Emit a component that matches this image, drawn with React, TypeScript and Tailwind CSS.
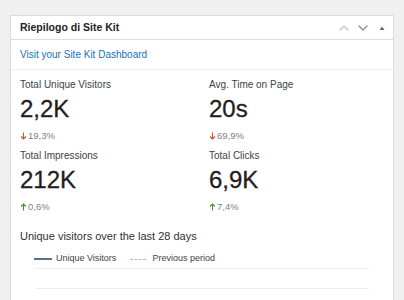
import { ChevronDown, ChevronUp } from "lucide-react";

interface Stat {
  label: string;
  value: string;
  change: string;
  up: boolean;
}

const stats: Stat[] = [
  { label: "Total Unique Visitors", value: "2,2K", change: "19,3%", up: false },
  { label: "Avg. Time on Page", value: "20s", change: "69,9%", up: false },
  { label: "Total Impressions", value: "212K", change: "0,6%", up: true },
  { label: "Total Clicks", value: "6,9K", change: "7,4%", up: true },
];

const Arrow = ({ up }: { up: boolean }) => (
  <svg width="7" height="8" viewBox="0 0 7 8" className={up ? "text-[#4f8a3e]" : "text-[#c9503a]"}>
    {up ? (
      <path d="M3.5 7.5V1M1 3.5L3.5 1L6 3.5" fill="none" stroke="currentColor" strokeWidth="1.1" />
    ) : (
      <path d="M3.5 0.5V7M1 4.5L3.5 7L6 4.5" fill="none" stroke="currentColor" strokeWidth="1.1" />
    )}
  </svg>
);

const StatCell = ({ stat, first }: { stat: Stat; first: boolean }) => (
  <div className={first ? "" : "mt-[8px]"}>
    <div className="h-[12px] text-[10px] leading-[12px] text-[#3c434a]">{stat.label}</div>
    <div className="mt-[4px] h-[28px] text-[24px] leading-[28px] text-[#1e1e1e] [-webkit-text-stroke:0.3px_#1e1e1e]">
      {stat.value}
    </div>
    <div className="mt-[7px] flex h-[12px] items-center gap-[1px] text-[9.5px] leading-[12px] text-[#7e8186]">
      <Arrow up={stat.up} />
      <span>{stat.change}</span>
    </div>
  </div>
);

export default function App() {
  return (
    <div
      className="min-h-screen bg-[#f0f0f1] px-[10px] pt-[15px]"
      style={{ fontFamily: '"Liberation Sans", Arial, sans-serif' }}
    >
      <div className="h-[300px] border border-[#dcdcde] bg-white">
        {/* header */}
        <div className="flex h-[24px] items-center justify-between border-b border-[#dcdcde] pl-[9px] pr-[3px]">
          <h2 className="text-[10.5px] font-bold text-[#1d2327]">Riepilogo di Site Kit</h2>
          <div className="flex items-center gap-[3px]">
            <ChevronUp size={16} strokeWidth={1.8} className="text-[#c3c4c7]" />
            <ChevronDown size={16} strokeWidth={2} className="text-[#8c8f94]" />
            <svg width="16" height="14" viewBox="0 0 16 14" className="text-[#646970]">
              <path d="M5.5 9L8 5.5L10.5 9Z" fill="currentColor" />
            </svg>
          </div>
        </div>

        {/* link */}
        <div className="flex h-[30px] items-center border-b border-[#f0f0f1] pl-[9px]">
          <a className="text-[10px] text-[#2271b1]">Visit your Site Kit Dashboard</a>
        </div>

        {/* stats */}
        <div className="px-[9px] pt-[9px]">
          <div className="grid grid-cols-[189px_1fr]">
            <StatCell stat={stats[0]} first />
            <StatCell stat={stats[1]} first />
          </div>
          <div className="grid grid-cols-[189px_1fr]">
            <StatCell stat={stats[2]} first={false} />
            <StatCell stat={stats[3]} first={false} />
          </div>

          <div className="mt-[16px] h-[14px] text-[11px] leading-[14px] text-[#2c3338]">
            Unique visitors over the last 28 days
          </div>

          <div className="mt-[10px] flex h-[12px] items-center pl-[14px] text-[9px] text-[#3c434a]">
            <span className="h-[1.5px] w-[18px] bg-[#5b6e94]" />
            <span className="ml-[4px]">Unique Visitors</span>
            <span className="ml-[14px] w-[16px] border-t border-dashed border-[#b4b7ba]" />
            <span className="ml-[6px]">Previous period</span>
          </div>

          <div className="ml-[16px] mr-[15px] mt-[3px]">
            <div className="h-[20px] border-t border-[#ececec]" />
            <div className="h-[20px] border-t border-[#ececec]" />
          </div>
        </div>
      </div>
    </div>
  );
}
